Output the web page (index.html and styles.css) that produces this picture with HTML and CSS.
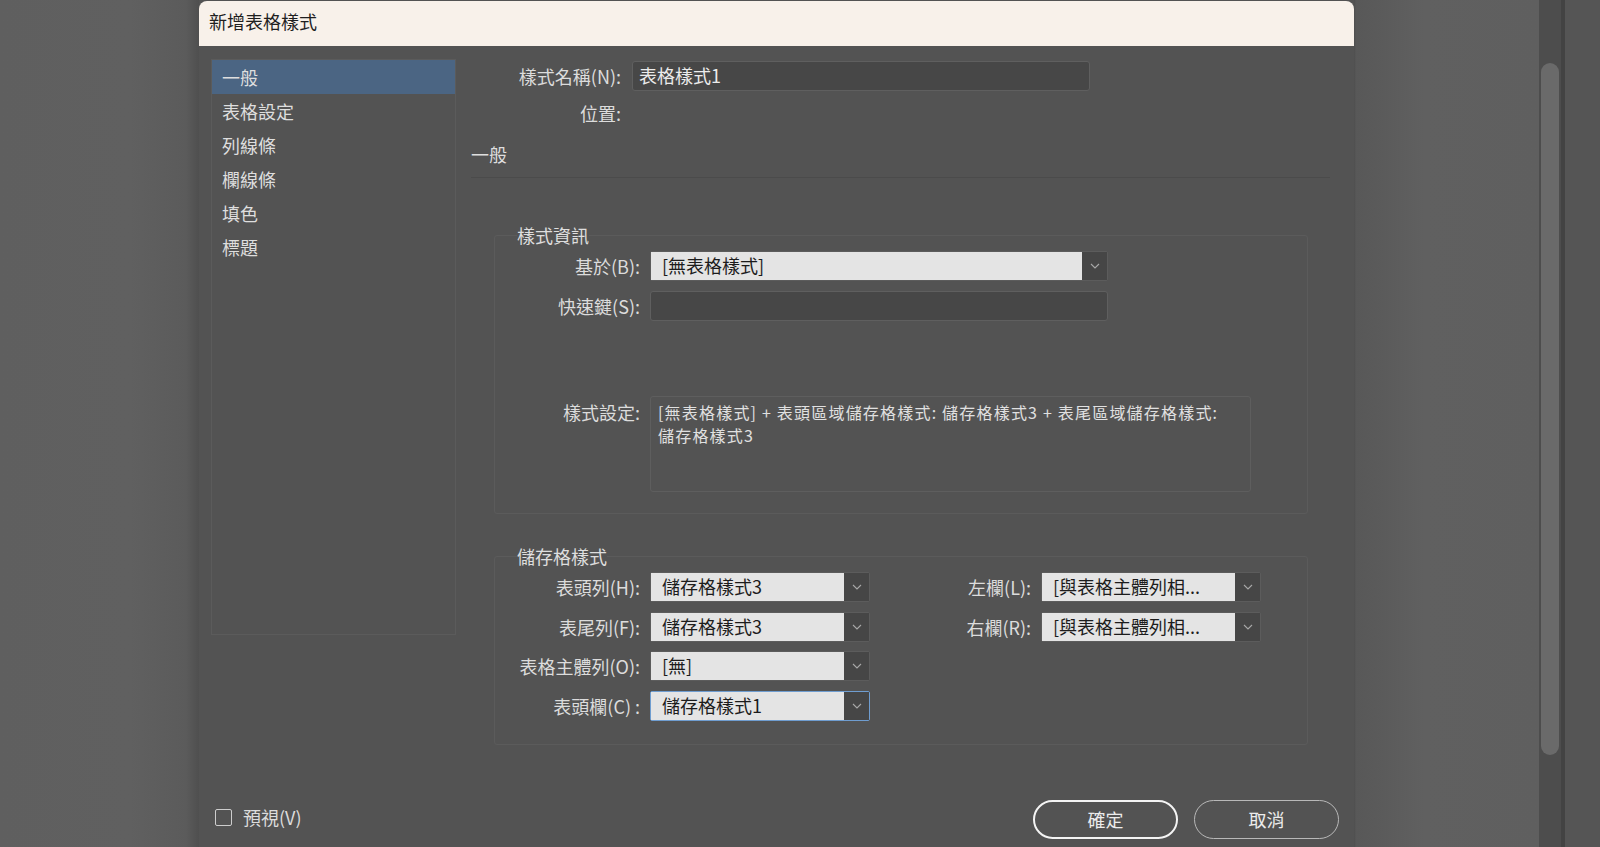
FILE: index.html
```html
<!DOCTYPE html>
<html lang="zh-Hant">
<head>
<meta charset="UTF-8">
<meta name="viewport" content="width=device-width, initial-scale=1.0">
<title>新增表格樣式</title>
<link rel="stylesheet" href="styles.css">
</head>
<body>
<div class="desk">
  <div class="desk-left"></div>

  <div class="dialog">
    <div class="dialog-title">新增表格樣式</div>

    <div class="dialog-body">
      <ul class="nav-list">
        <li class="active">一般</li>
        <li>表格設定</li>
        <li>列線條</li>
        <li>欄線條</li>
        <li>填色</li>
        <li>標題</li>
      </ul>

      <div class="pane">
        <div class="field-row">
          <span class="label">樣式名稱(N):</span>
          <div class="text-field name-field">表格樣式1</div>
        </div>
        <div class="field-row location-row">
          <span class="label">位置:</span>
        </div>

        <div class="pane-heading">一般</div>

        <fieldset class="group">
          <legend>樣式資訊</legend>
          <div class="form-grid">
            <span class="label">基於(B):</span>
            <div class="select wide">
              <span class="select-value">[無表格樣式]</span>
              <span class="select-arrow"><svg viewBox="0 0 10 6"><path d="M1 1l4 4 4-4"/></svg></span>
            </div>
            <span class="label">快速鍵(S):</span>
            <div class="text-field wide"></div>
          </div>
          <div class="form-grid summary-grid">
            <span class="label">樣式設定:</span>
            <div class="summary">[無表格樣式] + 表頭區域儲存格樣式: 儲存格樣式3 + 表尾區域儲存格樣式:<br>儲存格樣式3</div>
          </div>
        </fieldset>

        <fieldset class="group cell-group">
          <legend>儲存格樣式</legend>
          <div class="cell-grid">
            <span class="label">表頭列(H):</span>
            <div class="select">
              <span class="select-value">儲存格樣式3</span>
              <span class="select-arrow"><svg viewBox="0 0 10 6"><path d="M1 1l4 4 4-4"/></svg></span>
            </div>
            <span class="label">左欄(L):</span>
            <div class="select">
              <span class="select-value">[與表格主體列相...</span>
              <span class="select-arrow"><svg viewBox="0 0 10 6"><path d="M1 1l4 4 4-4"/></svg></span>
            </div>

            <span class="label">表尾列(F):</span>
            <div class="select">
              <span class="select-value">儲存格樣式3</span>
              <span class="select-arrow"><svg viewBox="0 0 10 6"><path d="M1 1l4 4 4-4"/></svg></span>
            </div>
            <span class="label">右欄(R):</span>
            <div class="select">
              <span class="select-value">[與表格主體列相...</span>
              <span class="select-arrow"><svg viewBox="0 0 10 6"><path d="M1 1l4 4 4-4"/></svg></span>
            </div>

            <span class="label">表格主體列(O):</span>
            <div class="select">
              <span class="select-value">[無]</span>
              <span class="select-arrow"><svg viewBox="0 0 10 6"><path d="M1 1l4 4 4-4"/></svg></span>
            </div>
            <span></span>
            <span></span>

            <span class="label">表頭欄(C) :</span>
            <div class="select focused">
              <span class="select-value">儲存格樣式1</span>
              <span class="select-arrow"><svg viewBox="0 0 10 6"><path d="M1 1l4 4 4-4"/></svg></span>
            </div>
          </div>
        </fieldset>
      </div>
    </div>

    <div class="dialog-footer">
      <span class="checkbox"></span>
      <span class="checkbox-label">預視(V)</span>
      <div class="buttons">
        <button class="btn primary">確定</button>
        <button class="btn">取消</button>
      </div>
    </div>
  </div>

  <div class="desk-right">
    <div class="canvas"></div>
    <div class="scroll-track"><div class="scroll-thumb"></div></div>
    <div class="panel-edge"></div>
    <div class="panel"></div>
  </div>
</div>
</body>
</html>
```

FILE: styles.css
```css
* {
  box-sizing: border-box;
}

body {
  margin: 0;
  padding: 0;
  background-color: #5e5e5e;
  font-family: "Noto Sans CJK TC", "Noto Sans", sans-serif;
  overflow: hidden;
}

.desk {
  display: flex;
  height: 847px;
}

.desk-left {
  width: 199px;
  background: linear-gradient(to right, #5f5f5f 0, #606060 130px, #5b5b5b 186px, #4f4f4f 199px);
}

/* dialog */

.dialog {
  width: 1155px;
  background-color: #535353;
  display: flex;
  flex-direction: column;
}

.dialog-title {
  height: 45px;
  margin-top: 1px;
  background-color: #f8f1ea;
  border-radius: 8px 8px 0 0;
  color: #1f1f1f;
  font-size: 18px;
  line-height: 41px;
  padding-left: 10px;
}

.dialog-body {
  display: flex;
  padding: 13px 0 0 12px;
}

.nav-list {
  width: 245px;
  height: 576px;
  margin: 0;
  padding: 0;
  list-style: none;
  border: 1px solid #5b5b5b;
}

.nav-list li {
  height: 34px;
  line-height: 34px;
  padding-left: 10px;
  font-size: 18px;
  color: #dedede;
}

.nav-list li.active {
  background-color: #4b6583;
}

.pane {
  width: 859px;
  margin-left: 15px;
  padding-top: 2px;
}

.label {
  font-size: 18px;
  color: #dcdcdc;
  text-align: right;
  white-space: nowrap;
}

.field-row {
  display: flex;
  align-items: center;
  gap: 11px;
  height: 30px;
}

.field-row .label {
  width: 150px;
}

.location-row {
  height: 26px;
  margin-top: 9px;
}

.pane-heading {
  margin-top: 15px;
  font-size: 18px;
  line-height: 26px;
  color: #dedede;
  padding-bottom: 10px;
  border-bottom: 1px solid #4b4b4b;
}

/* inputs */

.text-field {
  height: 30px;
  background-color: #474747;
  border: 1px solid #5f5f5f;
  border-radius: 3px;
  color: #ececec;
  font-size: 18px;
  line-height: 27px;
  padding: 0 6px;
}

.name-field {
  width: 458px;
}

.select {
  display: flex;
  width: 220px;
  height: 30px;
  border: 1px solid #5c5c5c;
  border-radius: 2px;
}

.select.wide,
.text-field.wide {
  width: 458px;
}

.select.focused {
  border-color: #6f9dd0;
}

.select-value {
  flex: 1;
  background-color: #e4e4e4;
  color: #1c1c1c;
  font-size: 18px;
  line-height: 27px;
  padding-left: 11px;
  white-space: nowrap;
  overflow: hidden;
}

.select-arrow {
  width: 25px;
  background-color: #464646;
  display: flex;
  align-items: center;
  justify-content: center;
}

.select-arrow svg {
  width: 10px;
  height: 6px;
  fill: none;
  stroke: #a8a8a8;
  stroke-width: 1.1;
}

/* groups */

.group {
  margin: 44px 22px 0 23px;
  padding: 3px 0 21px 0;
  border: 1px solid #5b5b5b;
  border-radius: 3px;
  min-width: 0;
}

.group legend {
  margin-left: 22px;
  padding: 0;
  font-size: 18px;
  line-height: 26px;
  color: #dedede;
}

.form-grid {
  display: grid;
  grid-template-columns: 145px 1fr;
  column-gap: 10px;
  row-gap: 10px;
  align-items: center;
  justify-items: start;
}

.form-grid .label {
  justify-self: end;
}

.summary-grid {
  margin-top: 75px;
  align-items: start;
}

.summary-grid .label {
  line-height: 26px;
  margin-top: 3px;
}

.summary {
  width: 601px;
  height: 96px;
  border: 1px solid #5e5e5e;
  border-radius: 3px;
  padding: 4px 7px;
  font-size: 16px;
  line-height: 23px;
  letter-spacing: 1.2px;
  color: #e0e0e0;
}

.cell-group {
  margin-top: 29px;
  padding-bottom: 23px;
}

.cell-grid {
  display: grid;
  grid-template-columns: 145px 220px 151px 220px;
  column-gap: 10px;
  row-gap: 9.5px;
  align-items: center;
}

/* footer */

.dialog-footer {
  display: flex;
  align-items: center;
  height: 39px;
  margin-top: 55px;
  padding: 0 15px 0 16px;
}

.checkbox {
  width: 17px;
  height: 17px;
  margin-top: -4px;
  border: 1.5px solid #cdcdcd;
  border-radius: 2px;
}

.checkbox-label {
  margin-left: 11px;
  margin-top: -4px;
  font-size: 18px;
  color: #dcdcdc;
}

.buttons {
  margin-left: auto;
  display: flex;
  gap: 16px;
}

.btn {
  width: 145px;
  height: 39px;
  border: 1px solid #b8b8b8;
  border-radius: 20px;
  background: transparent;
  color: #ececec;
  font-family: inherit;
  font-size: 18px;
}

.btn.primary {
  border: 2px solid #f4f4f4;
}

/* background app on the right */

.desk-right {
  flex: 1;
  display: flex;
}

.canvas {
  width: 185px;
  background: linear-gradient(to right, #4e4e4e 0, #585858 2px, #5b5b5b 30px, #606060 70px, #5f5f5f 185px);
}

.scroll-track {
  width: 22px;
  background-color: #4d4d4d;
  padding-top: 63px;
}

.scroll-thumb {
  width: 18px;
  height: 692px;
  margin: 0 auto;
  border-radius: 9px;
  background-color: #6a6a6a;
}

.panel-edge {
  width: 4px;
  background-color: #434343;
}

.panel {
  flex: 1;
  background-color: #555555;
}
```
